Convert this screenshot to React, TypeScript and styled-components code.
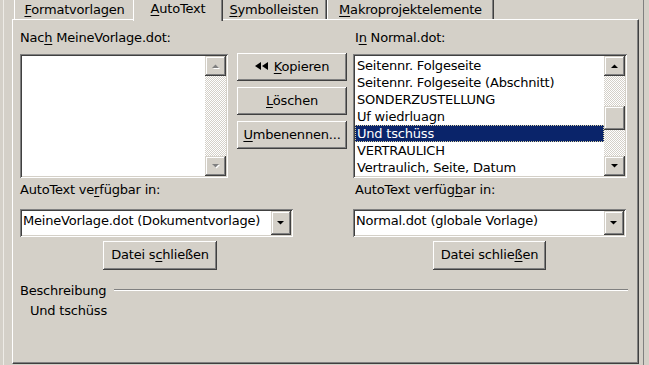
import React from "react";
import styled, { createGlobalStyle, css } from "styled-components";

const Global = createGlobalStyle`
  html, body { margin: 0; padding: 0; background: #d4d0c8; }
  body {
    font-family: "DejaVu Sans", "Liberation Sans", sans-serif;
    font-size: 13px;
    letter-spacing: -0.2px;
    color: #000;
  }
  * { box-sizing: border-box; }
`;

const Dialog = styled.div`
  margin-left: 3px;
  width: 641px;
  height: 365px;
  overflow: hidden;
  display: flex;
  flex-direction: column;
  padding: 0 4px 0 8px;
  border-left: 1px solid #eeece7;
  border-right: 1px solid #808080;
  background: #d4d0c8;
`;

const TabStrip = styled.div`
  display: flex;
  align-items: flex-end;
  height: 19px;
  padding-left: 2px;
  position: relative;
  z-index: 1;
`;

const Tab = styled.div<{ $w: number; $active?: boolean }>`
  width: ${(p) => p.$w}px;
  height: 19px;
  padding-top: 2px;
  line-height: 16px;
  text-align: center;
  white-space: nowrap;
  background: #d4d0c8;
  border-left: 1px solid #fff;
  border-right: 1px solid #404040;
  box-shadow: inset -1px 0 #808080;
  ${(p) =>
    p.$active &&
    css`
      height: 21px;
      margin: 0 -2px -2px;
      padding-top: 1px;
      position: relative;
      z-index: 2;
    `}
`;

const Key = styled.span`
  text-decoration: underline;
  text-underline-offset: 2px;
`;

const Panel = styled.div`
  flex: 1;
  margin-bottom: 1px;
  border-left: 1px solid #fff;
  border-top: 1px solid #fff;
  border-right: 1px solid #404040;
  border-bottom: 1px solid #404040;
  box-shadow: inset -1px -1px #808080;
  padding: 10px 11px 0 7px;
  display: flex;
  flex-direction: column;
`;

const TopGrid = styled.div`
  display: grid;
  grid-template-columns: 208px 1fr 274px;
  grid-template-rows: 16px 124px;
  row-gap: 8px;
`;

const Label = styled.div<{ $indent?: number }>`
  line-height: 16px;
  white-space: nowrap;
  padding-left: ${(p) => p.$indent ?? 0}px;
`;

const sunken = css`
  padding: 2px;
  box-shadow: inset 1px 1px #808080, inset -1px -1px #fff, inset 2px 2px #404040,
    inset -2px -2px #d4d0c8;
`;

const raised = css`
  box-shadow: inset -1px -1px #404040, inset 1px 1px #fff, inset -2px -2px #808080,
    inset 2px 2px #d4d0c8;
`;

const ListBox = styled.div`
  height: 124px;
  background: #fff;
  display: flex;
  ${sunken}
`;

const Items = styled.div`
  flex: 1;
  padding-top: 1px;
  overflow: hidden;
`;

const Row = styled.div<{ $sel?: boolean }>`
  height: 17px;
  line-height: 17px;
  padding-left: 2px;
  white-space: nowrap;
  ${(p) =>
    p.$sel &&
    css`
      background: #0a246a;
      color: #fff;
      outline: 1px dotted #d8d0a0;
      outline-offset: -1px;
    `}
`;

const ScrollBar = styled.div`
  width: 21px;
  display: flex;
  flex-direction: column;
  background: repeating-conic-gradient(#fff 0 25%, #d4d0c8 0 50%) 0 0 / 2px 2px;
`;

const ScrollBtn = styled.div`
  height: 20px;
  flex: none;
  background: #d4d0c8;
  display: flex;
  align-items: center;
  justify-content: center;
  box-shadow: inset -1px -1px #404040, inset 1px 1px #d4d0c8, inset -2px -2px #808080,
    inset 2px 2px #fff;
`;

const Thumb = styled(ScrollBtn)<{ $top: number; $h: number }>`
  margin-top: ${(p) => p.$top}px;
  height: ${(p) => p.$h}px;
`;

const Track = styled.div`
  flex: 1;
`;

const ButtonCol = styled.div`
  grid-row: 2;
  grid-column: 2;
  padding: 0 6px 0 9px;
  margin-top: -1px;
  display: flex;
  flex-direction: column;
  gap: 6px;
`;

const PushButton = styled.button<{ $w?: number; $h?: number; $dx?: number }>`
  font: inherit;
  letter-spacing: inherit;
  color: #000;
  background: #d4d0c8;
  border: 0;
  padding: 0 0 2px;
  height: ${(p) => p.$h ?? 28}px;
  ${(p) => (p.$w ? `width: ${p.$w}px;` : "")}
  ${(p) => (p.$dx ? `margin-left: ${p.$dx}px;` : "")}
  display: flex;
  align-items: center;
  justify-content: center;
  gap: 5px;
  white-space: nowrap;
  ${raised}
`;

const BottomGrid = styled.div`
  display: grid;
  grid-template-columns: 273px 273px;
  column-gap: 60px;
  margin-top: 4px;
`;

const Col = styled.div`
  display: flex;
  flex-direction: column;
  align-items: stretch;
`;

const Combo = styled.div`
  height: 28px;
  margin-top: 11px;
  background: #fff;
  display: flex;
  ${sunken}
`;

const ComboText = styled.div`
  flex: 1;
  padding: 2px 0 0 1px;
  line-height: 16px;
  white-space: nowrap;
  overflow: hidden;
`;

const DropBtn = styled(ScrollBtn)`
  width: 20px;
  height: auto;
`;

const CloseBtnWrap = styled.div`
  margin-top: 4px;
  display: flex;
  justify-content: center;
`;

const GroupHeader = styled.div`
  display: flex;
  gap: 8px;
  margin-top: 13px;
  margin-right: -1px;
`;

const Etch = styled.div`
  flex: 1;
  margin-top: 6px;
  height: 2px;
  border-top: 1px solid #808080;
  border-bottom: 1px solid #fff;
`;

const Description = styled.div`
  margin-top: 4px;
  padding-left: 10px;
  line-height: 16px;
`;

const Arrow = ({ dir, disabled }: { dir: "up" | "down"; disabled?: boolean }) => {
  const pts = dir === "up" ? "0,4 7,4 3.5,0.5" : "0,0 7,0 3.5,3.5";
  return (
    <svg width="8" height="5" viewBox="0 0 8 5" style={{ overflow: "visible" }}>
      {disabled && <polygon points={pts} fill="#fff" transform="translate(1,1)" />}
      <polygon points={pts} fill={disabled ? "#808080" : "#000"} />
    </svg>
  );
};

const DoubleLeft = () => (
  <svg width="14" height="8" viewBox="0 0 14 8">
    <polygon points="0,4 6,0 6,8" fill="#000" />
    <polygon points="7,4 13,0 13,8" fill="#000" />
  </svg>
);

const normalItems = [
  "Seitennr. Folgeseite",
  "Seitennr. Folgeseite (Abschnitt)",
  "SONDERZUSTELLUNG",
  "Uf wiedrluagn",
  "Und tschüss",
  "VERTRAULICH",
  "Vertraulich, Seite, Datum",
];

export default function App() {
  return (
    <>
      <Global />
      <Dialog>
        <TabStrip>
          <Tab $w={121}>
            <Key>F</Key>ormatvorlagen
          </Tab>
          <Tab $w={90} $active>
            <Key>A</Key>utoText
          </Tab>
          <Tab $w={106}>
            <Key>S</Key>ymbolleisten
          </Tab>
          <Tab $w={167}>
            <Key>M</Key>akroprojektelemente
          </Tab>
        </TabStrip>
        <Panel>
          <TopGrid>
            <Label>
              Nac<Key>h</Key> MeineVorlage.dot:
            </Label>
            <div />
            <Label $indent={2}>
              I<Key>n</Key> Normal.dot:
            </Label>
            <ListBox>
              <Items />
              <ScrollBar>
                <ScrollBtn>
                  <Arrow dir="up" disabled />
                </ScrollBtn>
                <Track />
                <ScrollBtn>
                  <Arrow dir="down" disabled />
                </ScrollBtn>
              </ScrollBar>
            </ListBox>
            <ButtonCol>
              <PushButton>
                <DoubleLeft />
                <span>
                  <Key>K</Key>opieren
                </span>
              </PushButton>
              <PushButton>
                <span>
                  <Key>L</Key>öschen
                </span>
              </PushButton>
              <PushButton>
                <span>
                  <Key>U</Key>mbenennen...
                </span>
              </PushButton>
            </ButtonCol>
            <ListBox>
              <Items>
                {normalItems.map((t, i) => (
                  <Row key={t} $sel={i === 4}>
                    {t}
                  </Row>
                ))}
              </Items>
              <ScrollBar>
                <ScrollBtn>
                  <Arrow dir="up" />
                </ScrollBtn>
                <Thumb $top={30} $h={24} />
                <Track />
                <ScrollBtn>
                  <Arrow dir="down" />
                </ScrollBtn>
              </ScrollBar>
            </ListBox>
          </TopGrid>

          <BottomGrid>
            <Col>
              <Label>
                AutoText ve<Key>r</Key>fügbar in:
              </Label>
              <Combo>
                <ComboText>MeineVorlage.dot (Dokumentvorlage)</ComboText>
                <DropBtn>
                  <Arrow dir="down" />
                </DropBtn>
              </Combo>
              <CloseBtnWrap>
                <PushButton $w={114} $h={29} $dx={7}>
                  <span>
                    Datei s<Key>c</Key>hließen
                  </span>
                </PushButton>
              </CloseBtnWrap>
            </Col>
            <Col>
              <Label $indent={2}>
                AutoText verfüg<Key>b</Key>ar in:
              </Label>
              <Combo>
                <ComboText>Normal.dot (globale Vorlage)</ComboText>
                <DropBtn>
                  <Arrow dir="down" />
                </DropBtn>
              </Combo>
              <CloseBtnWrap>
                <PushButton $w={113} $h={29}>
                  <span>
                    Datei schlie<Key>ß</Key>en
                  </span>
                </PushButton>
              </CloseBtnWrap>
            </Col>
          </BottomGrid>

          <GroupHeader>
            <Label>Beschreibung</Label>
            <Etch />
          </GroupHeader>
          <Description>Und tschüss</Description>
        </Panel>
      </Dialog>
    </>
  );
}
